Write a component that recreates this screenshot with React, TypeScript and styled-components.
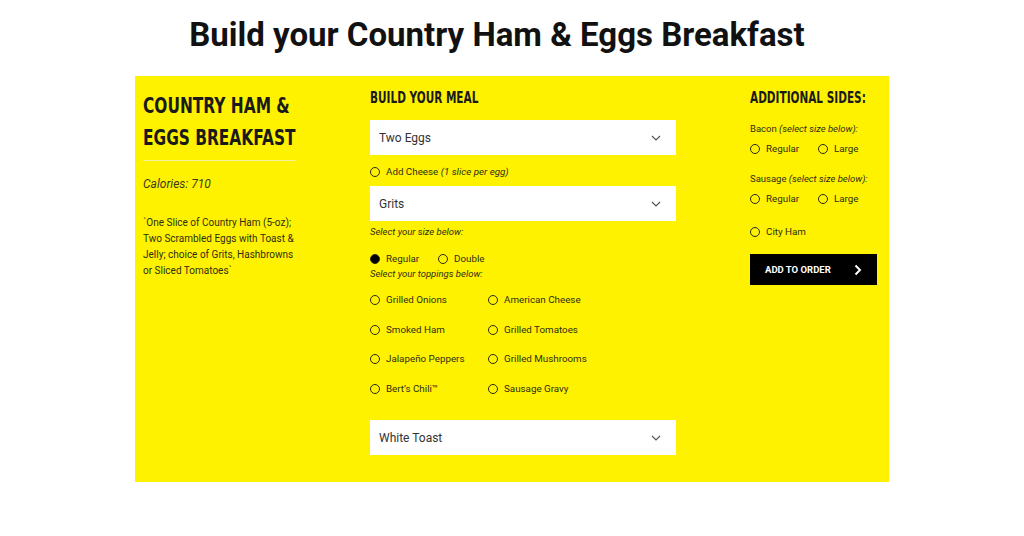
import styled, { createGlobalStyle } from "styled-components";

const GlobalStyle = createGlobalStyle`
  html, body {
    margin: 0;
    padding: 0;
    background: #fff;
  }
  body {
    font-family: Roboto, "Liberation Sans", sans-serif;
    color: #333;
  }
`;

const toppings = [
  ["Grilled Onions", "American Cheese"],
  ["Smoked Ham", "Grilled Tomatoes"],
  ["Jalapeño Peppers", "Grilled Mushrooms"],
  ["Bert’s Chili™", "Sausage Gravy"],
];

function Chevron() {
  return (
    <svg width="10" height="6" viewBox="0 0 10 6">
      <path d="M1 1 L5 5 L9 1" fill="none" stroke="#555" strokeWidth="1.2" />
    </svg>
  );
}

function Select({ value }: { value: string }) {
  return (
    <SelectBox>
      <span>{value}</span>
      <Chevron />
    </SelectBox>
  );
}

function Radio({ label, checked, note }: { label: string; checked?: boolean; note?: string }) {
  return (
    <RadioLabel>
      <Dot checked={checked} />
      <span>
        {label}
        {note && <em> {note}</em>}
      </span>
    </RadioLabel>
  );
}

export default function App() {
  return (
    <>
      <GlobalStyle />
      <Page>
        <Title>Build your Country Ham &amp; Eggs Breakfast</Title>
        <Panel>
          <Intro>
            <Heading>
              <Narrow>COUNTRY HAM &amp;</Narrow>
              <Narrow>EGGS BREAKFAST</Narrow>
            </Heading>
            <Divider />
            <Calories>Calories: 710</Calories>
            <Desc>
              ˋOne Slice of Country Ham (5-oz); Two Scrambled Eggs with Toast &amp; Jelly; choice
              of Grits, Hashbrowns or Sliced Tomatoesˋ
            </Desc>
          </Intro>

          <Meal>
            <SectionTitle>
              <Narrow>BUILD YOUR MEAL</Narrow>
            </SectionTitle>
            <Select value="Two Eggs" />
            <CheeseRow>
              <Radio label="Add Cheese" note="(1 slice per egg)" />
            </CheeseRow>
            <Select value="Grits" />
            <Hint>Select your size below:</Hint>
            <SizeRow>
              <Radio label="Regular" checked />
              <Radio label="Double" />
            </SizeRow>
            <Hint>Select your toppings below:</Hint>
            <Toppings>
              {toppings.flat().map((t) => (
                <Radio key={t} label={t} />
              ))}
            </Toppings>
            <Select value="White Toast" />
          </Meal>

          <Sides>
            <SectionTitle>
              <Narrow>ADDITIONAL SIDES:</Narrow>
            </SectionTitle>
            <SideLabel>
              Bacon <em>(select size below):</em>
            </SideLabel>
            <SidePair>
              <Radio label="Regular" />
              <Radio label="Large" />
            </SidePair>
            <SideLabel>
              Sausage <em>(select size below):</em>
            </SideLabel>
            <SidePair>
              <Radio label="Regular" />
              <Radio label="Large" />
            </SidePair>
            <CityHam>
              <Radio label="City Ham" />
            </CityHam>
            <OrderButton>
              <span>ADD TO ORDER</span>
              <svg width="8" height="12" viewBox="0 0 8 12">
                <path d="M1.5 1.5 L6 6 L1.5 10.5" fill="none" stroke="#fff" strokeWidth="2" />
              </svg>
            </OrderButton>
          </Sides>
        </Panel>
      </Page>
    </>
  );
}

const Page = styled.div`
  width: 1024px;
  height: 536px;
  display: flex;
  flex-direction: column;
  align-items: center;
`;

const Title = styled.h1`
  margin: 13px 30px 0 0;
  height: 63px;
  font-family: Roboto, "Liberation Sans", sans-serif;
  font-weight: 700;
  font-size: 33px;
  line-height: 44px;
  color: #111;
`;

const Panel = styled.div`
  width: 754px;
  height: 406px;
  box-sizing: border-box;
  background: #fff200;
  padding: 14px 13px 0 8px;
  display: grid;
  grid-template-columns: 153px 306px 127px;
  column-gap: 74px;
  align-items: start;
`;

/* no condensed face installed, so the display type is squeezed */
const Narrow = styled.span`
  display: block;
  white-space: nowrap;
  transform: scaleX(0.7);
  transform-origin: left center;
`;

const Intro = styled.div`
  display: flex;
  flex-direction: column;
`;

const Heading = styled.h2`
  margin: 0;
  font-family: "DejaVu Sans", sans-serif;
  font-weight: 700;
  font-size: 22px;
  line-height: 32px;
  color: #1a1a1a;
`;

const Divider = styled.div`
  height: 1px;
  background: #f4f0a0;
  margin: 6px 0 15px;
`;

const Calories = styled.div`
  font-style: italic;
  font-size: 12px;
  line-height: 16px;
  color: #3a3a20;
`;

const Desc = styled.p`
  margin: 23px 0 0;
  font-size: 10px;
  line-height: 16px;
  color: #2e2e14;
`;

const Meal = styled.div`
  display: flex;
  flex-direction: column;
`;

const SectionTitle = styled.h3`
  margin: 0 0 14px;
  font-family: "DejaVu Sans", sans-serif;
  font-weight: 700;
  font-size: 15px;
  line-height: 16px;
  color: #1a1a1a;
`;

const SelectBox = styled.div`
  height: 35px;
  background: #fff;
  display: flex;
  align-items: center;
  justify-content: space-between;
  padding: 0 15px 0 9px;
  font-size: 12px;
  color: #333;
`;

const RadioLabel = styled.label`
  display: flex;
  align-items: center;
  gap: 6px;
  font-size: 9.8px;
  line-height: 12px;
  color: #2e2e14;
  white-space: nowrap;
  & em {
    font-style: italic;
  }
`;

const Dot = styled.span<{ checked?: boolean }>`
  width: 10px;
  height: 10px;
  box-sizing: border-box;
  border-radius: 50%;
  border: 1.4px solid #2a2a10;
  background: ${(p) => (p.checked ? "#000" : "transparent")};
  flex-shrink: 0;
`;

const CheeseRow = styled.div`
  padding: 11px 0 8px;
`;

const Hint = styled.div<{ tight?: boolean }>`
  font-style: italic;
  font-size: 9.5px;
  line-height: 12px;
  color: #2e2e14;
  margin-top: 5px;
`;

const SizeRow = styled.div`
  display: grid;
  grid-template-columns: 68px auto;
  justify-content: start;
  margin: 15px 0 -2px;
`;

const Toppings = styled.div`
  display: grid;
  grid-template-columns: 118px auto;
  justify-content: start;
  row-gap: 17.7px;
  margin: 14px 0 25px;
`;

const Sides = styled.div`
  display: flex;
  flex-direction: column;
`;

const SideLabel = styled.div`
  font-size: 9.5px;
  line-height: 12px;
  color: #2e2e14;
  margin: 3px 0 8px;
  & em {
    font-style: italic;
  }
`;

const SidePair = styled.div`
  display: grid;
  grid-template-columns: 68px auto;
  justify-content: start;
  margin-bottom: 15px;
`;

const CityHam = styled.div`
  margin: 6px 0 16px;
`;

const OrderButton = styled.button`
  height: 31px;
  background: #000;
  border: none;
  display: flex;
  align-items: center;
  justify-content: space-between;
  padding: 0 15px;
  font-family: Roboto, "Liberation Sans", sans-serif;
  font-weight: 700;
  font-size: 9.5px;
  color: #fff;
  cursor: pointer;
`;
